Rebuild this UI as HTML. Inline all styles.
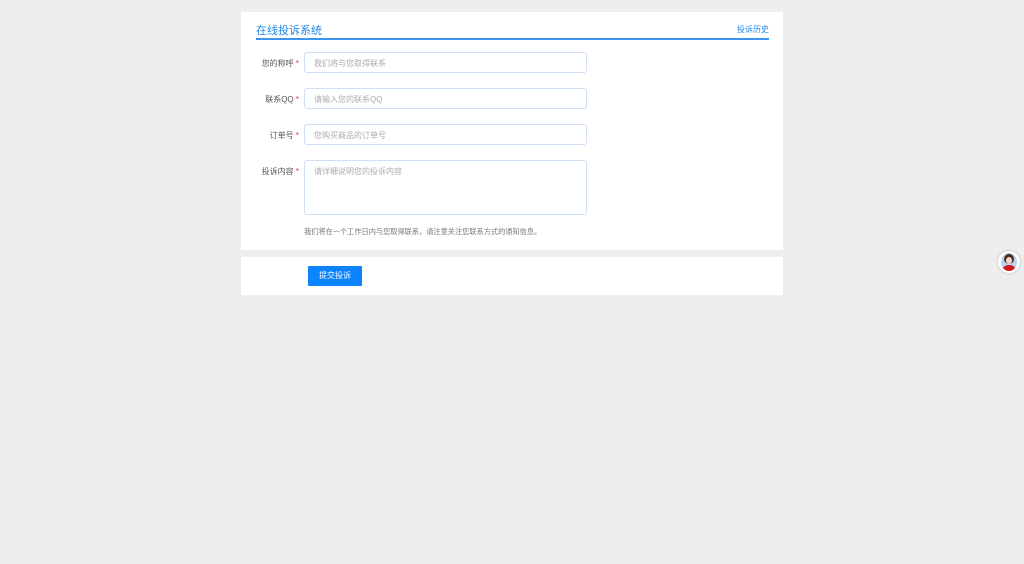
<!DOCTYPE html>
<html><head><meta charset="utf-8"><style>
body{margin:0;width:1024px;height:564px;background:#eeeeee;font-family:"Liberation Sans","Noto Sans CJK SC",sans-serif;position:relative;overflow:hidden}
.card{position:absolute;left:241px;top:12px;width:542px;height:238px;background:#fff}
.card2{position:absolute;left:241px;top:257px;width:542px;height:38px;background:#fff}
.title{position:absolute;left:15px;top:10px;font-size:11px;color:#1e88e5}
.hist{position:absolute;right:14px;top:12px;font-size:8px;color:#1e88e5}
.line{position:absolute;left:15px;right:14px;top:26px;height:2px;background:#3d94ee}
.lab{position:absolute;width:58px;text-align:right;font-size:8px;color:#555;left:0}
.lab b{color:#e33;font-weight:normal}
.in{position:absolute;left:63px;width:283px;height:21px;border:1px solid #cfe0f5;border-radius:3px;font-size:8px;color:#aaa;box-sizing:border-box;padding:5px 9px}
.note{position:absolute;left:63px;top:215px;font-size:7.2px;color:#777}
.btn{position:absolute;left:67px;top:9px;width:54px;height:20px;background:#0a84ff;color:#fff;font-size:8px;text-align:center;line-height:20px;border-radius:1px}
</style></head><body>
<div class="card">
<div class="title">在线投诉系统</div><div class="hist">投诉历史</div><div class="line"></div>
<div class="lab" style="top:46px">您的称呼 <b>*</b></div><div class="in" style="top:40px">我们将与您取得联系</div>
<div class="lab" style="top:82px">联系QQ <b>*</b></div><div class="in" style="top:76px">请输入您的联系QQ</div>
<div class="lab" style="top:118px">订单号 <b>*</b></div><div class="in" style="top:112px">您购买商品的订单号</div>
<div class="lab" style="top:154px">投诉内容 <b>*</b></div><div class="in" style="top:148px;height:55px">请详细说明您的投诉内容</div>
<div class="note">我们将在一个工作日内与您取得联系，请注意关注您联系方式的通知信息。</div>
</div>
<div class="card2"><div class="btn">提交投诉</div></div>
<div style="position:absolute;left:998px;top:251px;width:22px;height:22px;border-radius:50%;background:#fff;box-shadow:0 0 3px #bbb">
<div style="position:absolute;left:3px;top:2px;width:16px;height:18px;border-radius:50%;background:#b8d3ef;overflow:hidden">
<div style="position:absolute;left:3px;top:1px;width:10px;height:10px;border-radius:50%;background:#4a2a22"></div>
<div style="position:absolute;left:5px;top:4px;width:6px;height:7px;border-radius:50%;background:#f5d6c6"></div>
<div style="position:absolute;left:2px;top:12px;width:12px;height:8px;border-radius:50%;background:#d01818"></div>
</div></div>
</body></html>
